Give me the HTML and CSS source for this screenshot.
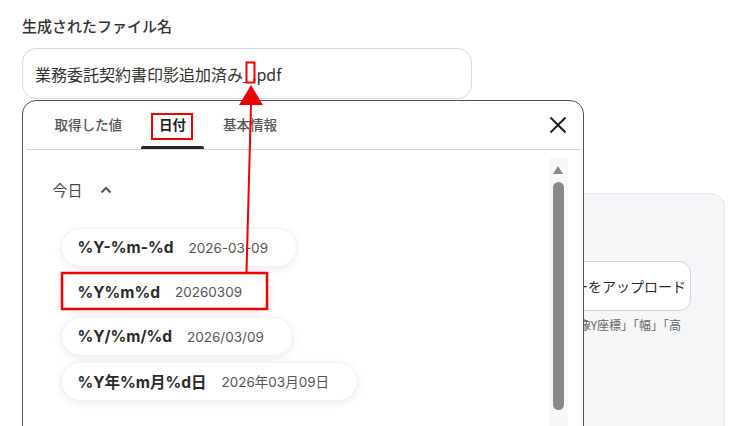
FILE: index.html
```html
<!DOCTYPE html>
<html lang="ja">
<head>
    <meta charset="utf-8">
    <link rel="stylesheet" href="styles.css">
</head>
<body>
    <div class="page">
        <!-- ファイル名 -->
        <div class="field-title">生成されたファイル名</div>
        <div class="name-input">業務委託契約書印影追加済み_.pdf</div>

        <!-- 背面の設定カード -->
        <div class="bg-card">
            <div class="bg-col">
                <div class="upload-btn">フォルダーをアップロード</div>
                <div class="bg-help">「画像X座標」「画像Y座標」「幅」「高</div>
            </div>
        </div>

        <!-- 値の挿入メニュー -->
        <div class="picker">
            <div class="tabs">
                <div class="tab"><span class="tab-label">取得した値</span><span class="tab-bar"></span></div>
                <div class="tab active"><span class="tab-label">日付</span><span class="tab-bar"></span></div>
                <div class="tab"><span class="tab-label">基本情報</span><span class="tab-bar"></span></div>
                <svg class="close" width="18" height="18" viewBox="0 0 18 18">
                    <path d="M1.5 1.5 L16.5 16.5 M16.5 1.5 L1.5 16.5" stroke="#1f1f1f" stroke-width="2" fill="none"/>
                </svg>
            </div>
            <div class="divider"></div>
            <div class="picker-body">
                <div class="list">
                    <div class="group-head">
                        <span>今日</span>
                        <svg width="12" height="8" viewBox="0 0 12 8">
                            <path d="M1.5 6.5 L6 2 L10.5 6.5" stroke="#555" stroke-width="2" fill="none"/>
                        </svg>
                    </div>
                    <div class="chip"><span class="chip-key">%Y-%m-%d</span><span class="chip-val">2026-03-09</span></div>
                    <div class="chip"><span class="chip-key">%Y%m%d</span><span class="chip-val">20260309</span></div>
                    <div class="chip"><span class="chip-key">%Y/%m/%d</span><span class="chip-val">2026/03/09</span></div>
                    <div class="chip"><span class="chip-key">%Y年%m月%d日</span><span class="chip-val">2026年03月09日</span></div>
                </div>
                <div class="scroll-track">
                    <span class="scroll-up"></span>
                    <span class="scroll-thumb"></span>
                </div>
            </div>
        </div>

        <!-- 注釈 -->
        <svg class="notes" width="752" height="426" viewBox="0 0 752 426">
            <rect x="246.5" y="62.5" width="8" height="20" fill="none" stroke="#ec0000" stroke-width="2"/>
            <rect x="152" y="114" width="40" height="25" fill="none" stroke="#ec0000" stroke-width="2"/>
            <rect x="62" y="273" width="205" height="36" fill="none" stroke="#ec0000" stroke-width="2.5"/>
            <line x1="251" y1="104" x2="246.5" y2="272" stroke="#ec0000" stroke-width="2"/>
            <polygon points="251,85 239,105 263,105" fill="#ec0000"/>
        </svg>
    </div>
</body>
</html>
```

FILE: styles.css
```css
body {
    margin: 0;
    background: #ffffff;
    font-family: "Inter", "Noto Sans CJK JP", sans-serif;
    color: #333333;
    overflow: hidden;
}

.page {
    position: relative;
    width: 752px;
    height: 426px;
    padding: 15px 0 0 22px;
    box-sizing: border-box;
    overflow: hidden;
}

.field-title {
    font-family: "Noto Sans CJK JP", sans-serif;
    font-size: 15px;
    line-height: 22px;
    font-weight: 500;
    color: #333333;
    margin-bottom: 11px;
}

.name-input {
    width: 450px;
    height: 51px;
    box-sizing: border-box;
    border: 1px solid #d5d9e0;
    border-radius: 14px;
    padding: 0 12px;
    display: flex;
    align-items: center;
    font-family: "Noto Sans CJK JP", sans-serif;
    font-size: 16px;
    color: #333333;
}

/* 背面のカード */
.bg-card {
    margin-top: 94px;
    width: 703px;
    height: 260px;
    box-sizing: border-box;
    background: #f5f6f8;
    border: 1px solid #e3e6ea;
    border-radius: 14px;
    padding: 67px 33px 0 0;
    display: flex;
    justify-content: flex-end;
}

.bg-col {
    width: 320px;
    display: flex;
    flex-direction: column;
    align-items: flex-end;
}

.upload-btn {
    width: 100%;
    height: 50px;
    box-sizing: border-box;
    background: #ffffff;
    border: 1px solid #cfd4dc;
    border-radius: 12px;
    padding: 0 4px;
    display: flex;
    align-items: center;
    justify-content: flex-end;
    font-family: "Noto Sans CJK JP", sans-serif;
    font-size: 14px;
    color: #2a2a2a;
}

.bg-help {
    margin-top: 5px;
    padding-right: 10px;
    font-family: "Noto Sans CJK JP", sans-serif;
    font-size: 12px;
    line-height: 18px;
    color: #666666;
    white-space: nowrap;
}

/* メニュー */
.picker {
    position: absolute;
    top: 100px;
    left: 22px;
    width: 562px;
    height: 350px;
    box-sizing: border-box;
    background: #ffffff;
    border: 1.5px solid #4b5260;
    border-radius: 14px;
    overflow: hidden;
    display: flex;
    flex-direction: column;
}

.tabs {
    height: 48px;
    display: flex;
    align-items: stretch;
    padding: 0 16px 0 12.5px;
}

.tab {
    display: flex;
    flex-direction: column;
    padding: 0 19px;
    font-family: "Noto Sans CJK JP", sans-serif;
    font-size: 13.5px;
    font-weight: 500;
    color: #555555;
}

.tab-label {
    flex: 1;
    display: flex;
    align-items: center;
    justify-content: center;
}

.tab-bar {
    height: 3px;
    margin: 0 -19px;
    border-radius: 2px 2px 0 0;
}

.tab.active {
    color: #1f1f1f;
    font-weight: 700;
    padding: 0 18px;
}

.tab.active .tab-bar {
    background: #25282c;
    margin: 0 -18px;
}

.close {
    margin-left: auto;
    align-self: center;
}

.divider {
    height: 1px;
    margin: 0 2.5px;
    background: #d3d8de;
}

.picker-body {
    flex: 1;
    display: flex;
}

.list {
    flex: 1;
    display: flex;
    flex-direction: column;
    align-items: flex-start;
    gap: 5.5px;
    padding-left: 29.5px;
}

.group-head {
    display: flex;
    align-items: center;
    gap: 17px;
    margin-top: 30px;
    margin-bottom: 22.5px;
    font-family: "Noto Sans CJK JP", sans-serif;
    font-size: 15px;
    line-height: 20px;
    color: #4a4a4a;
}

.chip {
    height: 39px;
    box-sizing: border-box;
    margin-left: 8px;
    padding: 0 28px 0 16px;
    display: flex;
    align-items: center;
    gap: 15px;
    background: #ffffff;
    border: 1px solid #f0f1f3;
    border-radius: 20px;
    box-shadow: 0 2px 9px rgba(0, 0, 0, 0.08);
}

.chip-key {
    font-size: 15.5px;
    font-weight: 700;
    color: #2a2a2a;
}

.chip-val {
    font-size: 13.5px;
    color: #555555;
}

.scroll-track {
    width: 19px;
    margin: 8px 15.5px 0 0;
    background: #f8f8f8;
    display: flex;
    flex-direction: column;
    align-items: center;
}

.scroll-up {
    margin-top: 8px;
    width: 0;
    height: 0;
    border-left: 5.5px solid transparent;
    border-right: 5.5px solid transparent;
    border-bottom: 8px solid #8a8a8a;
}

.scroll-thumb {
    margin-top: 8px;
    width: 11px;
    height: 228px;
    border-radius: 6px;
    background: #898989;
}

.notes {
    position: absolute;
    top: 0;
    left: 0;
    pointer-events: none;
}
```
